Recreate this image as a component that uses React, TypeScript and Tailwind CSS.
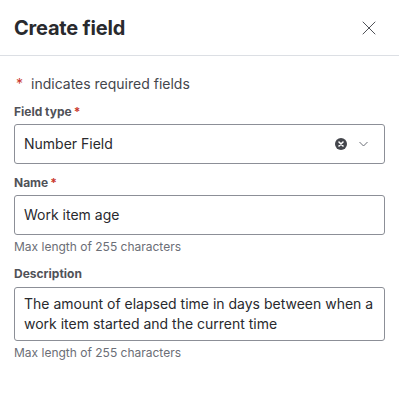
import { X } from 'lucide-react'

function Label({ text, required }: { text: string; required?: boolean }) {
  return (
    <div className="flex h-4 items-center text-[12px] font-bold leading-4 text-[#505258]">
      {text}
      {required && <span className="ml-0.5 text-[#c9372c]">*</span>}
    </div>
  )
}

function Helper({ text }: { text: string }) {
  return <div className="mt-1 text-[12px] leading-4 text-[#6b6e76]">{text}</div>
}

export default function App() {
  return (
    <div className="h-[396px] w-[399px] bg-white font-['Inter',sans-serif] text-[#292a2e]">
      {/* header */}
      <div className="flex h-14 items-center justify-between border-b border-[#dcdfe4] pl-[14px] pr-[18px]">
        <h1 className="text-[20px] font-bold leading-6 tracking-[-0.2px]">Create field</h1>
        <button className="text-[#505258]">
          <X size={24} strokeWidth={1} />
        </button>
      </div>

      <div className="px-[14px]">
        <div className="mt-[18px] flex h-5 items-center text-[14px] leading-5 text-[#44464c]">
          <span className="ml-[2px] mr-2 text-[#c9372c]">*</span>
          indicates required fields
        </div>

        {/* field type */}
        <div className="mt-[10px]">
          <Label text="Field type" required />
          <div className="mt-[4px] flex h-10 items-center rounded-[3px] border border-[#8c8f97] pl-[9px] pr-[16px]">
            <span className="flex-1 text-[14px] leading-5">Number Field</span>
            <svg width="12" height="12" viewBox="0 0 12 12" className="mr-3">
              <circle cx="6" cy="6" r="6" fill="#44464c" />
              <path d="M4 4l4 4M8 4l-4 4" stroke="white" strokeWidth="1.6" strokeLinecap="round" />
            </svg>
            <svg width="9" height="6" viewBox="0 0 9 6">
              <path d="M0.5 1l4 4 4-4" fill="none" stroke="#6b6e76" strokeWidth="1" />
            </svg>
          </div>
        </div>

        {/* name */}
        <div className="mt-[11px]">
          <Label text="Name" required />
          <div className="mt-[4px] flex h-10 items-center rounded-[3px] border border-[#8c8f97] px-[9px] text-[14px] leading-5">
            Work item age
          </div>
          <Helper text="Max length of 255 characters" />
        </div>

        {/* description */}
        <div className="mt-[11px]">
          <Label text="Description" />
          <div className="mt-[5px] rounded-[3px] border border-[#8c8f97] px-[9px] py-[6px] text-[14px] leading-5">
            The amount of elapsed time in days between when a work item started and the current time
          </div>
          <Helper text="Max length of 255 characters" />
        </div>
      </div>
    </div>
  )
}
